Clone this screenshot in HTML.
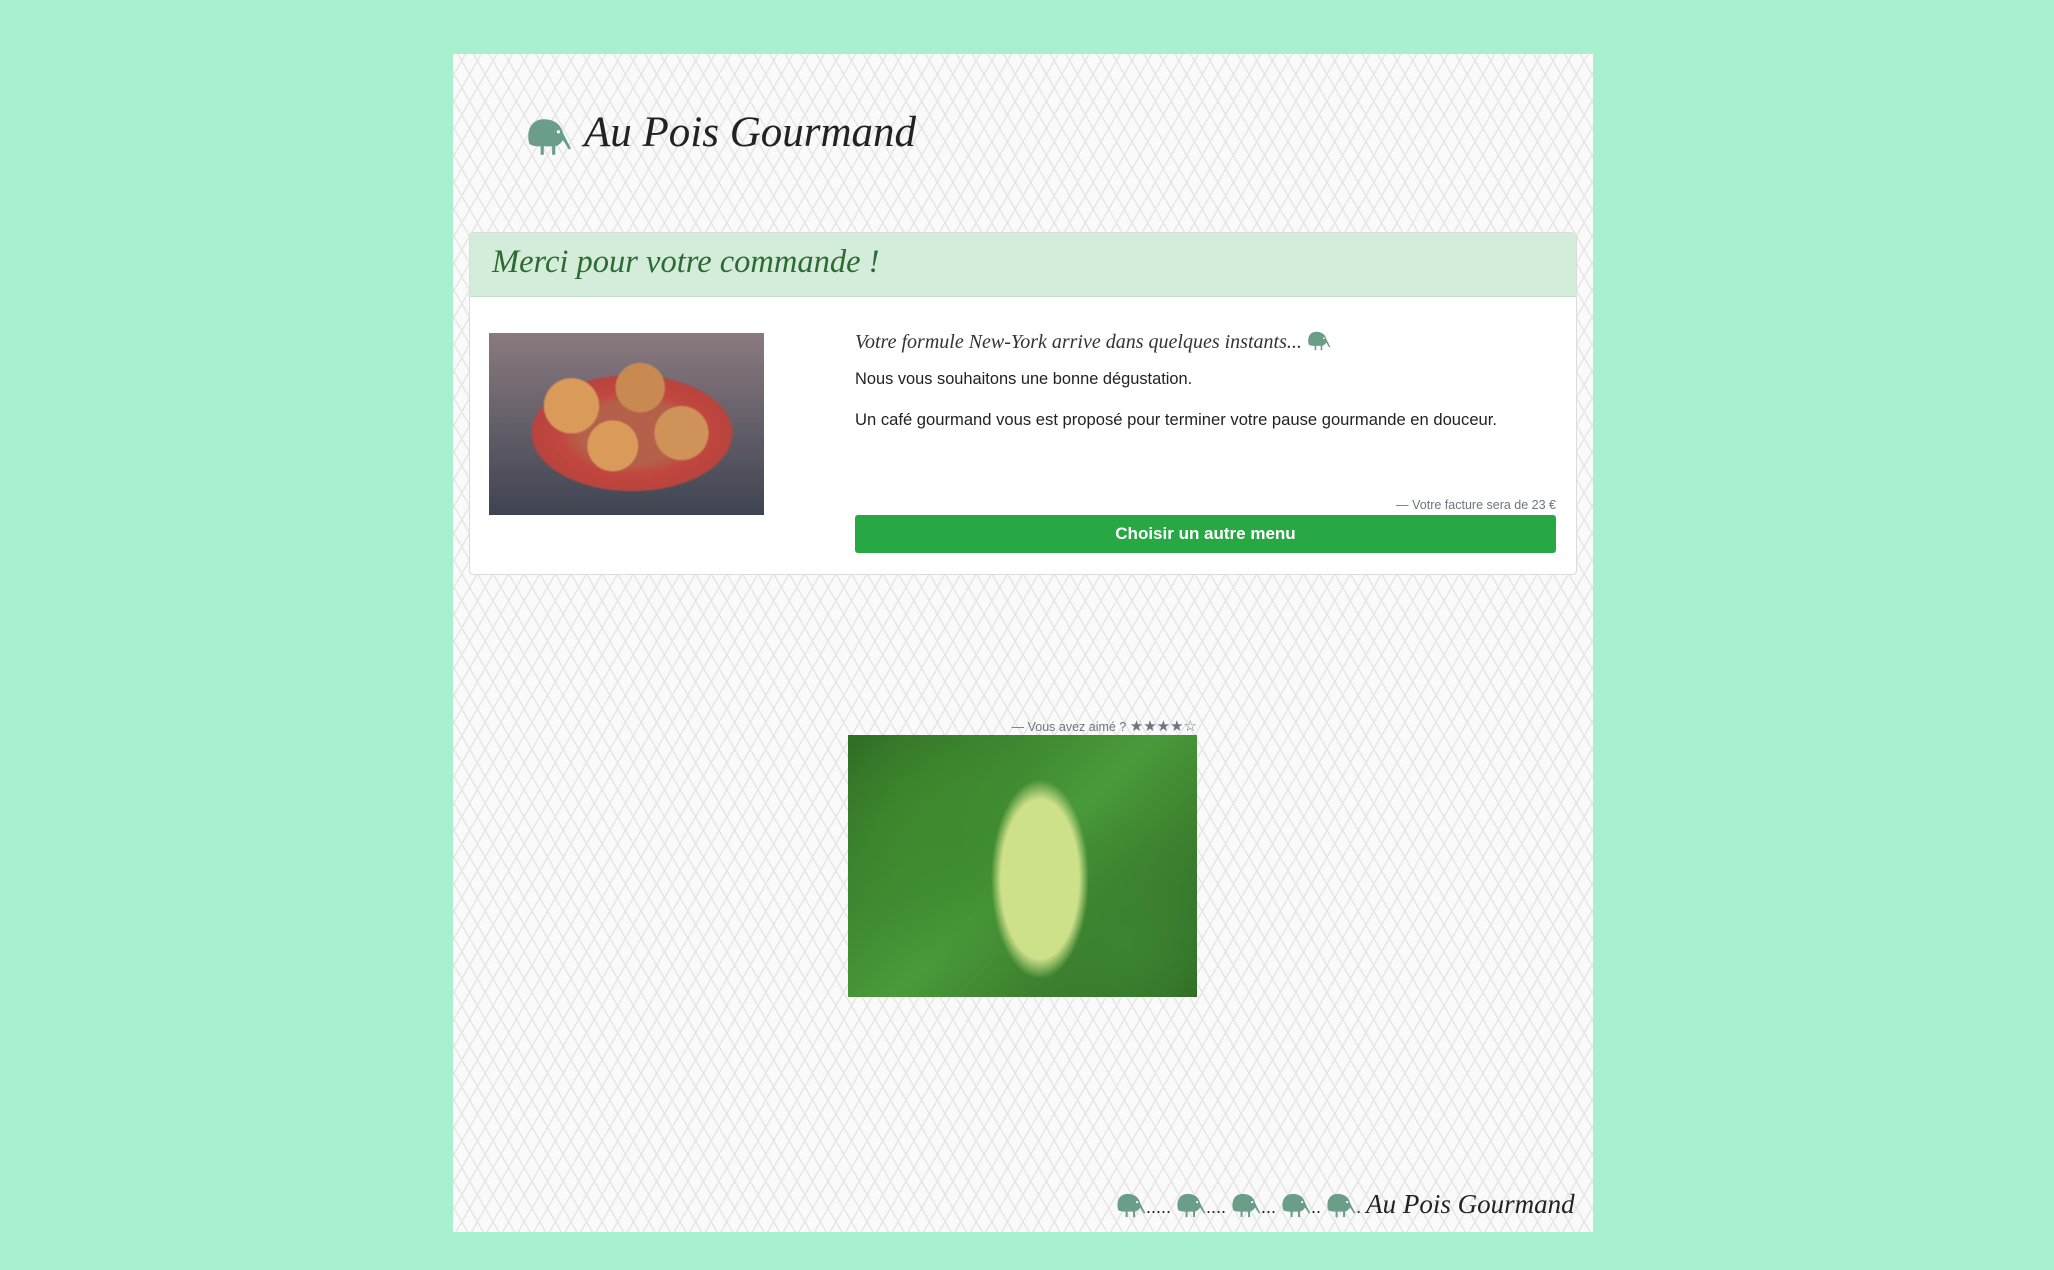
<!DOCTYPE html>
<html><head><meta charset="utf-8"><style>
html,body{margin:0;padding:0}
body{width:2054px;height:1270px;background:#a8f0cf;position:relative;overflow:hidden;font-family:"Liberation Sans",sans-serif}
.page{position:absolute;left:453px;top:54px;width:1140px;height:1178px;background-color:#fafafa;
background-image:repeating-linear-gradient(60deg,transparent 0 12px,#e6e6e6 12px 13.5px),repeating-linear-gradient(-60deg,transparent 0 12px,#e6e6e6 12px 13.5px);}
.abs{position:absolute}
.script{font-family:"Liberation Serif",serif;font-style:italic}
.card{left:469px;top:232px;width:1106px;height:341px;background:#fff;border:1px solid #dcdcdc;border-radius:4px;overflow:hidden}
.hdr{position:absolute;left:0;top:0;right:0;height:63px;background:#d4ecda;border-bottom:1px solid #c3e0ca}
.btn{left:855px;top:515px;width:701px;height:38px;background:#28a745;border-radius:3px;color:#fff;font-weight:bold;font-size:17px;text-align:center;line-height:38px}
</style></head><body>
<div class="page"></div>
<svg width="0" height="0" style="position:absolute"><defs><symbol id="kiwi" viewBox="0 0 44 36"><path d="M3 24 C0 12 5 1 17 1 C27 1 33 6 35 13 C37 18 40 23 43 29 L41 30 C38 25 36 22 35 21 C34 24 31 26 28 27 L28 35 L25 35 L25 27 L17 27 L17 35 L14 35 L14 27 C8 27 4 26 3 24 Z" fill="#6a9e88"/><circle cx="31" cy="13" r="1.6" fill="#fff"/></symbol></defs></svg>
<svg class="abs" style="left:526px;top:118px" width="46" height="38"><use href="#kiwi"/></svg>
<div class="abs script" style="left:584px;top:108px;font-size:43px;color:#222;line-height:50px">Au Pois Gourmand</div>
<div class="abs card">
<div class="hdr"><div class="script" style="position:absolute;left:22px;top:11px;font-size:32.5px;color:#2d6a34">Merci pour votre commande !</div></div>
</div>
<div class="abs" style="left:489px;top:333px;width:275px;height:182px;background:radial-gradient(circle at 30% 40%,#d99a5a 0 12%,transparent 13%),radial-gradient(circle at 55% 30%,#c98a52 0 12%,transparent 13%),radial-gradient(circle at 45% 62%,#d99a5a 0 13%,transparent 14%),radial-gradient(circle at 70% 55%,#cf9258 0 12%,transparent 13%),radial-gradient(ellipse 48% 42% at 52% 55%,#b4604a 0 40%,#c2463f 55%,#b8443e 75%,transparent 77%),linear-gradient(180deg,#8a7a80,#3f4452)"></div>
<div class="abs script" style="left:855px;top:331px;font-size:20px;color:#333;white-space:nowrap">Votre formule New-York arrive dans quelques instants... <svg width="24" height="20" style="vertical-align:-3px"><use href="#kiwi"/></svg></div>
<div class="abs" style="left:855px;top:370px;font-size:16.4px;color:#222">Nous vous souhaitons une bonne dégustation.</div>
<div class="abs" style="left:855px;top:410px;font-size:16.6px;color:#222">Un café gourmand vous est proposé pour terminer votre pause gourmande en douceur.</div>
<div class="abs" style="right:498px;top:498px;font-size:12.5px;color:#6c757d">— Votre facture sera de 23 €</div>
<div class="abs btn">Choisir un autre menu</div>
<div class="abs" style="right:857px;top:717px;font-size:12.5px;color:#6c757d">— Vous avez aimé ? <span style="font-size:15px">★★★★☆</span></div>
<div class="abs" style="left:848px;top:735px;width:349px;height:262px;background:radial-gradient(ellipse 14% 38% at 55% 55%,#cde08a 0 80%,transparent 100%),radial-gradient(circle at 30% 40%,#3f8a2e,transparent 45%),radial-gradient(circle at 80% 80%,#3b8430,transparent 40%),linear-gradient(135deg,#2f6e24,#4a9a3a 50%,#2d5f22)"></div>
<div class="abs" style="left:1116px;top:1190px;font-size:18px;color:#222;white-space:nowrap;line-height:28px">
<svg width="30" height="25" style="vertical-align:-5px"><use href="#kiwi"/></svg>.....&nbsp;<svg width="30" height="25" style="vertical-align:-5px"><use href="#kiwi"/></svg>....&nbsp;<svg width="30" height="25" style="vertical-align:-5px"><use href="#kiwi"/></svg>...&nbsp;<svg width="30" height="25" style="vertical-align:-5px"><use href="#kiwi"/></svg>..&nbsp;<svg width="30" height="25" style="vertical-align:-5px"><use href="#kiwi"/></svg>.&nbsp;<span class="script" style="font-size:27px">Au Pois Gourmand</span></div>
</body></html>
